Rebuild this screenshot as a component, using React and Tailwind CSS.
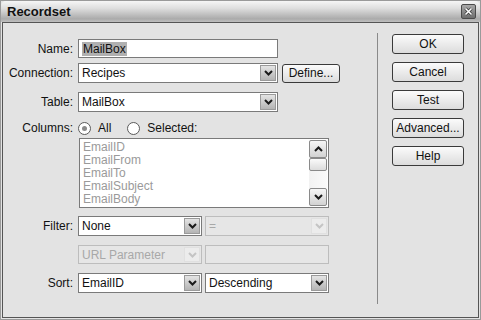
import React from "react";

const font = { fontFamily: '"Liberation Sans", Arial, sans-serif' };

function Chevron({ up = false, color = "#1a1a1a" }) {
  return (
    <svg width="9" height="6" viewBox="0 0 9 6">
      <polyline
        points={up ? "1,5 4.5,1.5 8,5" : "1,1 4.5,4.5 8,1"}
        fill="none"
        stroke={color}
        strokeWidth="2"
      />
    </svg>
  );
}

function Select({ w, text, disabled = false, h = "h-[20px]" }) {
  return (
    <div
      className={`${w} ${h} flex items-stretch border ${
        disabled ? "border-[#bdbdbd] bg-[#e6e6e6]" : "border-[#7a7a7a] bg-white"
      }`}
    >
      <div
        className={`flex-1 flex items-center pl-[3px] text-[12px] ${
          disabled ? "text-[#a8a8a8]" : "text-[#111]"
        }`}
      >
        {text}
      </div>
      <div
        className={`w-[16px] m-[1px] flex items-center justify-center border ${
          disabled
            ? "border-[#e0e0e0] bg-[#ececec]"
            : "border-[#9a9a9a] bg-gradient-to-b from-[#e4e4e4] to-[#b4b4b4]"
        }`}
      >
        <Chevron color={disabled ? "#c4c4c4" : "#1a1a1a"} />
      </div>
    </div>
  );
}

function Btn({ children, w = "w-[72px]", h = "h-[20px]" }) {
  return (
    <div
      className={`${w} ${h} flex items-center justify-center rounded-[3px] border border-[#3a3a3a] bg-gradient-to-b from-[#fbfbfb] to-[#dcdcdc] text-[12px] text-[#111]`}
    >
      {children}
    </div>
  );
}

function Radio({ checked }) {
  return (
    <div className="w-[13px] h-[13px] rounded-full border border-[#5a5a5a] bg-white flex items-center justify-center">
      {checked && <div className="w-[5px] h-[5px] rounded-full bg-[#8a8a8a]" />}
    </div>
  );
}

function Row({ label, mt, children }) {
  return (
    <div className={`flex items-center ${mt}`}>
      <div className="w-[70px] text-right text-[12px] text-[#111]">{label}</div>
      <div className="ml-[5px] flex items-center">{children}</div>
    </div>
  );
}

export default function App() {
  return (
    <div
      className="w-[481px] h-[320px] flex flex-col border border-[#9a9a9a] bg-[#e3e3e3] overflow-hidden"
      style={font}
    >
      <div className="h-[21px] shrink-0 flex items-center justify-between pl-[6px] pr-[4px] rounded-t-[5px] bg-[linear-gradient(to_bottom,#f6f6f6_0%,#dedede_35%,#ababab_85%,#bfbfbf_100%)]">
        <span className="text-[13px] font-bold text-[#111]">Recordset</span>
        <div className="w-[15px] h-[15px] rounded-[2px] border border-[#4a4a4a] bg-gradient-to-b from-[#a8a8a8] to-[#6e6e6e] flex items-center justify-center">
          <svg width="9" height="9" viewBox="0 0 9 9">
            <path d="M1.5 1.5 L7.5 7.5 M7.5 1.5 L1.5 7.5" stroke="#333" strokeWidth="3" />
            <path d="M1.5 1.5 L7.5 7.5 M7.5 1.5 L1.5 7.5" stroke="#fff" strokeWidth="1.6" />
          </svg>
        </div>
      </div>
      <div className="flex-1 mx-[1px] mb-[1px] border border-[#555] flex bg-[#e3e3e3]">
        <div className="w-[374px] shrink-0 flex flex-col pt-[16px]">
          <Row label="Name:" mt="">
            <div className="w-[200px] h-[19px] border border-[#7a7a7a] bg-white flex items-center pl-[3px]">
              <span className="bg-[#b0b0b0] text-[12px] text-[#111] px-[1px] leading-[14px]">MailBox</span>
            </div>
          </Row>
          <Row label="Connection:" mt="mt-[5px]">
            <Select w="w-[200px]" text="Recipes" />
            <div className="ml-[4px]">
              <Btn w="w-[58px]" h="h-[19px]">Define...</Btn>
            </div>
          </Row>
          <Row label="Table:" mt="mt-[9px]">
            <Select w="w-[200px]" text="MailBox" />
          </Row>
          <Row label="Columns:" mt="mt-[7px]">
            <div className="flex items-center h-[16px] text-[12px] text-[#111]">
              <Radio checked />
              <span className="ml-[7px]">All</span>
              <div className="ml-[16px]"><Radio /></div>
              <span className="ml-[7px]">Selected:</span>
            </div>
          </Row>
          <div className="flex mt-[1px]">
            <div className="w-[76px]" />
            <div className="w-[250px] h-[70px] border border-[#7a7a7a] bg-white flex">
              <div className="flex-1 flex flex-col pl-[3px] pt-[2px] text-[12px] leading-[13px] text-[#9a9a9a]">
                <span>EmailID</span>
                <span>EmailFrom</span>
                <span>EmailTo</span>
                <span>EmailSubject</span>
                <span>EmailBody</span>
              </div>
              <div className="w-[18px] mr-[1px] my-[1px] flex flex-col bg-gradient-to-r from-[#f2f2f2] to-[#fafafa]">
                <div className="h-[18px] rounded-[2px] border border-[#8a8a8a] bg-gradient-to-b from-[#f6f6f6] to-[#d2d2d2] flex items-center justify-center">
                  <Chevron up />
                </div>
                <div className="h-[13px] rounded-[2px] border border-[#8a8a8a] bg-gradient-to-b from-[#fafafa] to-[#dcdcdc]" />
                <div className="flex-1" />
                <div className="h-[18px] rounded-[2px] border border-[#8a8a8a] bg-gradient-to-b from-[#f6f6f6] to-[#d2d2d2] flex items-center justify-center">
                  <Chevron />
                </div>
              </div>
            </div>
          </div>
          <Row label="Filter:" mt="mt-[8px]">
            <Select w="w-[124px]" text="None" />
            <div className="ml-[3px]">
              <Select w="w-[124px]" text="=" disabled />
            </div>
          </Row>
          <Row label="" mt="mt-[9px]">
            <Select w="w-[124px]" h="h-[19px]" text="URL Parameter" disabled />
            <div className="ml-[3px] w-[124px] h-[19px] border border-[#bdbdbd] bg-[#e6e6e6]" />
          </Row>
          <Row label="Sort:" mt="mt-[9px]">
            <Select w="w-[124px]" text="EmailID" />
            <div className="ml-[3px]">
              <Select w="w-[124px]" text="Descending" />
            </div>
          </Row>
        </div>
        <div className="flex-1 mt-[10px] mb-[13px] border-l border-[#8a8a8a] pl-[14px] pt-[1px] flex flex-col gap-[8px]">
          <Btn>OK</Btn>
          <Btn>Cancel</Btn>
          <Btn>Test</Btn>
          <Btn>Advanced...</Btn>
          <Btn>Help</Btn>
        </div>
      </div>
    </div>
  );
}
